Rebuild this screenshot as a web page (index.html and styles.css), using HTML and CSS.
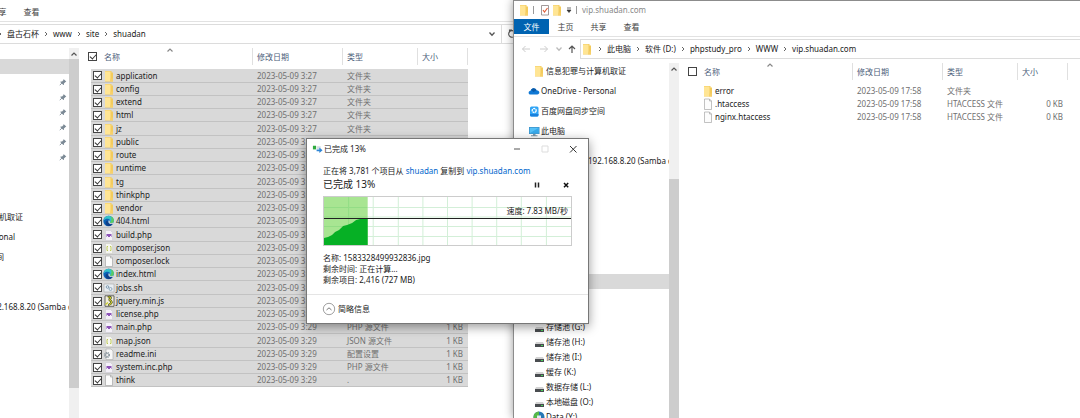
FILE: index.html
```html
<!DOCTYPE html>
<html lang="zh-CN">
<head>
  <meta charset="UTF-8">
  <meta name="viewport" content="width=device-width, initial-scale=1.0">
  <title>vip.shuadan.com</title>
  <link rel="stylesheet" href="styles.css">
</head>
<body>
  <!-- shared icons -->
  <svg class="sprite" aria-hidden="true">
    <symbol id="folder" viewBox="0 0 12 12">
      <path d="M2 1h6.500v1.500h1.500v9H2z" fill="#f3cb5c"/>
      <path d="M2 1.500h5.500v9.500H2z" fill="#ffe594"/>
      <path d="M7.500 8.500h2.500v3H7z" fill="#f7d06a"/>
    </symbol>
    <symbol id="file" viewBox="0 0 12 12">
      <path d="M2.500 1h5l2 2v8.500h-7z" fill="#fcfcfc" stroke="#a8a8a8" stroke-width=".7"/>
      <path d="M7.500 1v2h2" fill="none" stroke="#a8a8a8" stroke-width=".7"/>
    </symbol>
    <symbol id="edge" viewBox="0 0 12 12">
      <circle cx="5.500" cy="6" r="5.200" fill="#0c63b8"/>
      <path d="M1 4C2 1 5 .3 7.500 1.200 10.500 2.200 11.500 5 10.400 7c-.8 1.300-2.600 1.200-3.700.5C8 6 7 4 5 3.700 3.300 3.400 2 4 .6 5.500z" fill="#35c1c9"/>
      <path d="M7.500 1.200C10.500 2.200 11.500 5 10.400 7c-.8 1.300-2.600 1.200-3.700.5C9 6 9 3 7.500 1.200z" fill="#5ccb5f"/>
      <path d="M5 5.500c-.8 2 .7 4 4.500 3.700C7.500 12 2.500 11.400 2.500 8 2.500 6.500 3.500 5.600 5 5.500z" fill="#123f87"/>
      <path d="M5.800 5.200c1.200 0 1.200 1.300.9 2.300.9.800 2.500 1 3.700-.3L10 8.800C7 9.500 4.500 8 5.800 5.200z" fill="#d9d9d9"/>
    </symbol>
    <symbol id="php" viewBox="0 0 12 12">
      <path d="M2.500 1.500h5l2 2v8h-7z" fill="#f4f1f8" stroke="#c9c5d0" stroke-width=".5"/>
      <path d="M3.500 5h5v3H8V7H7v1H5V7H4v1h-.5z" fill="#8d54b8"/>
    </symbol>
    <symbol id="json" viewBox="0 0 12 12">
      <path d="M2.500 1.500h5l2 2v8h-7z" fill="#f6f6f0" stroke="#cbcbc4" stroke-width=".5"/>
      <path d="M5 4.500H4v4h1M7 4.500h1v4H7" fill="none" stroke="#b9c64a" stroke-width=".9"/>
    </symbol>
    <symbol id="sh" viewBox="0 0 12 12">
      <path d="M1 2h10v8H1z" fill="#e9eef2" stroke="#aaa" stroke-width=".6"/>
      <circle cx="4.500" cy="5" r="1.300" fill="none" stroke="#7e9cb5"/>
      <circle cx="7.500" cy="7" r="1.500" fill="none" stroke="#8fa9bd"/>
    </symbol>
    <symbol id="js" viewBox="0 0 12 12">
      <path d="M2 .8h9v10.500H2z" fill="#f2efd9" stroke="#444" stroke-width=".8"/>
      <path d="M5 2.500c2-1.500 3.500 0 2 1.500s2 1.500 1.500 3.500-3 1.500-2 3" fill="none" stroke="#2a2a2a" stroke-width="2.200"/>
      <path d="M5 2.500c2-1.500 3.500 0 2 1.500s2 1.500 1.500 3.500-3 1.500-2 3M2.500 9.500l2.500-2" fill="none" stroke="#c9cc2c" stroke-width="1.200"/>
    </symbol>
    <symbol id="ini" viewBox="0 0 12 12">
      <path d="M3 1h5l2 2v8.500H3z" fill="#f7f7f7" stroke="#aaa" stroke-width=".6"/>
      <circle cx="4" cy="7" r="2.400" fill="none" stroke="#8b979f" stroke-width="1.300" stroke-dasharray="1.200 .6"/>
      <circle cx="4" cy="7" r="1.600" fill="none" stroke="#8b979f" stroke-width=".7"/>
    </symbol>
    <symbol id="drive" viewBox="0 0 12 12">
      <path d="M3 6h7l1 2H2z" fill="#d3d3d3"/>
      <path d="M2 8h9v3H2z" fill="#4a4d50"/>
      <path d="M8 9h2v1H8z" fill="#49d05a"/>
    </symbol>
    <symbol id="pin" viewBox="0 0 8 8">
      <path d="M4.500 1l2.800 2.600-.8.300-1.600 1.500.1 1.300-.6.400L1.200 4l.6-.5 1.300.1 1.400-1.700z" fill="#7b8995"/>
      <path d="M2.900 5L.8 7.200" stroke="#7b8995" stroke-width=".9"/>
    </symbol>
    <symbol id="up" viewBox="0 0 8 8">
      <path d="M1.500 5.500L4 3l2.500 2.500" fill="none" stroke="currentColor" stroke-width="1.200"/>
    </symbol>
    <symbol id="down" viewBox="0 0 8 8">
      <path d="M1.500 2.500L4 5.200l2.500-2.700" fill="none" stroke="currentColor" stroke-width="1.300"/>
    </symbol>
    <symbol id="next" viewBox="0 0 4 8">
      <path d="M1 2l2 2-2 2" fill="none" stroke="currentColor" stroke-width=".9"/>
    </symbol>
  </svg>

  <main class="desktop">
    <!-- source window -->
    <section class="window source">
      <div class="titlebar"></div>
      <nav class="ribbon">
        <button class="tab push">共享</button>
        <button class="tab">查看</button>
      </nav>
      <div class="addressbar">
        <div class="path">
          <svg class="sep"><use href="#next"/></svg><a href="#">盘古石杯</a>
          <svg class="sep"><use href="#next"/></svg><a href="#">www</a>
          <svg class="sep"><use href="#next"/></svg><a href="#">site</a>
          <svg class="sep"><use href="#next"/></svg><a href="#">shuadan</a>
          <button class="drop" aria-label="展开"><svg class="small"><use href="#down"/></svg></button>
        </div>
        <button class="refresh" aria-label="刷新">
          <svg viewBox="0 0 10 10"><path d="M7.500 2.800A3.300 3.300 0 1 0 8.300 5M5 1H2.500v2.500" fill="none" stroke="#555" stroke-width="1.100"/></svg>
        </button>
      </div>
      <div class="body">
        <ul class="tree">
          <li class="selected first"></li>
          <li class="pinned"><svg class="small"><use href="#pin"/></svg></li>
          <li class="pinned"><svg class="small"><use href="#pin"/></svg></li>
          <li class="pinned"><svg class="small"><use href="#pin"/></svg></li>
          <li class="pinned"><svg class="small"><use href="#pin"/></svg></li>
          <li class="pinned"><svg class="small"><use href="#pin"/></svg></li>
          <li class="pinned"><svg class="small"><use href="#pin"/></svg></li>
          <li class="child after-pins">信息犯罪与计算机取证</li>
          <li class="root">OneDrive - Personal</li>
          <li class="root">百度网盘同步空间</li>
          <li class="share after-root">192.168.8.20 (Samba documents)</li>
        </ul>
        <div class="scrollbar">
          <svg class="small"><use href="#up"/></svg>
          <div class="thumb short"></div>
        </div>
        <table class="files checked">
          <colgroup>
            <col class="gutter"><col class="col-name"><col class="col-date"><col class="col-type"><col class="col-size">
          </colgroup>
          <thead>
            <tr>
              <th colspan="2"><label><input type="checkbox" checked>名称</label><svg class="small sort"><use href="#up"/></svg></th>
              <th>修改日期</th>
              <th>类型</th>
              <th>大小</th>
            </tr>
          </thead>
          <tbody>
            <tr><td class="gutter"></td><td><label><input type="checkbox" checked><svg class="icon"><use href="#folder"/></svg>application</label></td><td>2023-05-09 3:27</td><td>文件夹</td><td></td></tr>
            <tr><td class="gutter"></td><td><label><input type="checkbox" checked><svg class="icon"><use href="#folder"/></svg>config</label></td><td>2023-05-09 3:27</td><td>文件夹</td><td></td></tr>
            <tr><td class="gutter"></td><td><label><input type="checkbox" checked><svg class="icon"><use href="#folder"/></svg>extend</label></td><td>2023-05-09 3:27</td><td>文件夹</td><td></td></tr>
            <tr><td class="gutter"></td><td><label><input type="checkbox" checked><svg class="icon"><use href="#folder"/></svg>html</label></td><td>2023-05-09 3:27</td><td>文件夹</td><td></td></tr>
            <tr><td class="gutter"></td><td><label><input type="checkbox" checked><svg class="icon"><use href="#folder"/></svg>jz</label></td><td>2023-05-09 3:27</td><td>文件夹</td><td></td></tr>
            <tr><td class="gutter"></td><td><label><input type="checkbox" checked><svg class="icon"><use href="#folder"/></svg>public</label></td><td>2023-05-09 3:28</td><td></td><td></td></tr>
            <tr><td class="gutter"></td><td><label><input type="checkbox" checked><svg class="icon"><use href="#folder"/></svg>route</label></td><td>2023-05-09 3:28</td><td></td><td></td></tr>
            <tr><td class="gutter"></td><td><label><input type="checkbox" checked><svg class="icon"><use href="#folder"/></svg>runtime</label></td><td>2023-05-09 3:28</td><td></td><td></td></tr>
            <tr><td class="gutter"></td><td><label><input type="checkbox" checked><svg class="icon"><use href="#folder"/></svg>tg</label></td><td>2023-05-09 3:28</td><td></td><td></td></tr>
            <tr><td class="gutter"></td><td><label><input type="checkbox" checked><svg class="icon"><use href="#folder"/></svg>thinkphp</label></td><td>2023-05-09 3:28</td><td></td><td></td></tr>
            <tr><td class="gutter"></td><td><label><input type="checkbox" checked><svg class="icon"><use href="#folder"/></svg>vendor</label></td><td>2023-05-09 3:29</td><td></td><td></td></tr>
            <tr><td class="gutter"></td><td><label><input type="checkbox" checked><svg class="icon"><use href="#edge"/></svg>404.html</label></td><td>2023-05-09 3:29</td><td></td><td></td></tr>
            <tr><td class="gutter"></td><td><label><input type="checkbox" checked><svg class="icon"><use href="#php"/></svg>build.php</label></td><td>2023-05-09 3:29</td><td></td><td></td></tr>
            <tr><td class="gutter"></td><td><label><input type="checkbox" checked><svg class="icon"><use href="#json"/></svg>composer.json</label></td><td>2023-05-09 3:29</td><td></td><td></td></tr>
            <tr><td class="gutter"></td><td><label><input type="checkbox" checked><svg class="icon"><use href="#file"/></svg>composer.lock</label></td><td>2023-05-09 3:29</td><td></td><td></td></tr>
            <tr><td class="gutter"></td><td><label><input type="checkbox" checked><svg class="icon"><use href="#edge"/></svg>index.html</label></td><td>2023-05-09 3:29</td><td></td><td></td></tr>
            <tr><td class="gutter"></td><td><label><input type="checkbox" checked><svg class="icon"><use href="#sh"/></svg>jobs.sh</label></td><td>2023-05-09 3:29</td><td></td><td></td></tr>
            <tr><td class="gutter"></td><td><label><input type="checkbox" checked><svg class="icon"><use href="#js"/></svg>jquery.min.js</label></td><td>2023-05-09 3:29</td><td></td><td></td></tr>
            <tr><td class="gutter"></td><td><label><input type="checkbox" checked><svg class="icon"><use href="#php"/></svg>license.php</label></td><td>2023-05-09 3:29</td><td></td><td></td></tr>
            <tr><td class="gutter"></td><td><label><input type="checkbox" checked><svg class="icon"><use href="#php"/></svg>main.php</label></td><td>2023-05-09 3:29</td><td>PHP 源文件</td><td>1 KB</td></tr>
            <tr><td class="gutter"></td><td><label><input type="checkbox" checked><svg class="icon"><use href="#json"/></svg>map.json</label></td><td>2023-05-09 3:29</td><td>JSON 源文件</td><td>1 KB</td></tr>
            <tr><td class="gutter"></td><td><label><input type="checkbox" checked><svg class="icon"><use href="#ini"/></svg>readme.ini</label></td><td>2023-05-09 3:29</td><td>配置设置</td><td>1 KB</td></tr>
            <tr><td class="gutter"></td><td><label><input type="checkbox" checked><svg class="icon"><use href="#php"/></svg>system.inc.php</label></td><td>2023-05-09 3:29</td><td>PHP 源文件</td><td>1 KB</td></tr>
            <tr><td class="gutter"></td><td><label><input type="checkbox" checked><svg class="icon"><use href="#file"/></svg>think</label></td><td>2023-05-09 3:29</td><td>.</td><td>1 KB</td></tr>
          </tbody>
        </table>
      </div>
    </section>

    <!-- target window -->
    <section class="window target">
      <div class="titlebar">
        <svg class="icon"><use href="#folder"/></svg>
        <span class="bar"></span>
        <svg class="icon" viewBox="0 0 12 12"><path d="M2.500 1.500h7v9.500h-7z" fill="#fff" stroke="#8a8080" stroke-width=".8"/><path d="M4 6l1.500 2L8.500 4" fill="none" stroke="#e0603a" stroke-width="1.200"/></svg>
        <svg class="icon"><use href="#folder"/></svg>
        <svg class="small" viewBox="0 0 8 8"><path d="M2 2h4M2 4h4L4 6.500z" fill="#333" stroke="#333" stroke-width=".7"/></svg>
        <span class="bar"></span>
        <span class="caption">vip.shuadan.com</span>
      </div>
      <nav class="ribbon">
        <button class="tab file">文件</button>
        <button class="tab">主页</button>
        <button class="tab">共享</button>
        <button class="tab">查看</button>
      </nav>
      <div class="addressbar">
        <div class="history">
          <button aria-label="后退"><svg viewBox="0 0 10 10"><path d="M9 5H1.500M4.500 2l-3 3 3 3" fill="none" stroke="#ccc"/></svg></button>
          <button aria-label="前进"><svg viewBox="0 0 10 10"><path d="M1 5h7.500M5.500 2l3 3-3 3" fill="none" stroke="#ccc"/></svg></button>
          <button class="recent" aria-label="最近"><svg class="small"><use href="#down"/></svg></button>
          <button aria-label="上移"><svg viewBox="0 0 10 10"><path d="M5 9V2M2 5l3-3 3 3" fill="none" stroke="#555" stroke-width="1.200"/></svg></button>
        </div>
        <div class="path">
          <svg class="icon"><use href="#folder"/></svg>
          <svg class="sep"><use href="#next"/></svg><a href="#">此电脑</a>
          <svg class="sep"><use href="#next"/></svg><a href="#">软件 (D:)</a>
          <svg class="sep"><use href="#next"/></svg><a href="#">phpstudy_pro</a>
          <svg class="sep"><use href="#next"/></svg><a href="#">WWW</a>
          <svg class="sep"><use href="#next"/></svg><a href="#">vip.shuadan.com</a>
        </div>
      </div>
      <div class="body">
        <ul class="tree">
          <li class="child"><svg class="icon"><use href="#folder"/></svg>信息犯罪与计算机取证</li>
          <li class="root"><svg class="icon" viewBox="0 0 12 12"><path d="M2.500 9.500C0 9.500 0 6 2.500 5.800 3.500 2.500 7.500 2.500 8.500 5.200c3.500 0 3.800 4.300.7 4.300z" fill="#0f78d4"/><path d="M3 4.800c1.500-2.500 4.500-2 5.500.4L5.500 7z" fill="#0a5aa8"/></svg>OneDrive - Personal</li>
          <li class="root"><svg class="icon" viewBox="0 0 12 12"><rect x="2" y="1.500" width="8.500" height="10" rx="1.500" fill="#2fa4f5"/><circle cx="6.200" cy="5.500" r="2" fill="none" stroke="#fff" stroke-width="1.300" stroke-dasharray="2 .5"/><path d="M2 9h8.500v1q0 1.500-1.500 1.500H3.500Q2 11.500 2 10z" fill="#1980dc"/></svg>百度网盘同步空间</li>
          <li class="root"><svg class="icon" viewBox="0 0 12 12"><path d="M1 2h10.500v7H1z" fill="#3b8fc6"/><path d="M1.700 2.700h9.100v5.600H1.700z" fill="#55c1f7"/><path d="M1.700 8.300l9.100-5.600v5.600z" fill="#38a9ea"/><path d="M5 9h2.500v1.200h2v1h-6.500v-1h2z" fill="#7e97a8"/></svg>此电脑</li>
          <li class="share">192.168.8.20 (Samba documents)</li>
          <li class="selected later"></li>
          <li class="child drives"><svg class="icon"><use href="#drive"/></svg>存储池 (G:)</li>
          <li class="child"><svg class="icon"><use href="#drive"/></svg>储存池 (H:)</li>
          <li class="child"><svg class="icon"><use href="#drive"/></svg>储存池 (I:)</li>
          <li class="child"><svg class="icon"><use href="#drive"/></svg>缓存 (K:)</li>
          <li class="child"><svg class="icon"><use href="#drive"/></svg>数据存储 (L:)</li>
          <li class="child"><svg class="icon"><use href="#drive"/></svg>本地磁盘 (O:)</li>
          <li class="child"><svg class="icon" viewBox="0 0 12 12"><circle cx="6" cy="6" r="5.500" fill="#2778b5"/><path d="M6 .5A5.500 5.500 0 0 0 .5 6v3L6 5z" fill="#57b947"/><path d="M4 4.500h4V9H4z" fill="#dfeaf2"/></svg>Data (Y:)</li>
        </ul>
        <div class="scrollbar">
          <svg class="small"><use href="#up"/></svg>
          <div class="thumb low"></div>
        </div>
        <table class="files">
          <colgroup>
            <col class="gutter"><col class="col-name"><col class="col-date"><col class="col-type"><col class="col-size">
          </colgroup>
          <thead>
            <tr>
              <th colspan="2"><label><input type="checkbox">名称</label><svg class="small sort"><use href="#up"/></svg></th>
              <th>修改日期</th>
              <th>类型</th>
              <th>大小</th>
            </tr>
          </thead>
          <tbody>
            <tr><td class="gutter"></td><td><span class="entry"><svg class="icon"><use href="#folder"/></svg>error</span></td><td>2023-05-09 17:58</td><td>文件夹</td><td></td></tr>
            <tr><td class="gutter"></td><td><span class="entry"><svg class="icon"><use href="#file"/></svg>.htaccess</span></td><td>2023-05-09 17:58</td><td>HTACCESS 文件</td><td>0 KB</td></tr>
            <tr><td class="gutter"></td><td><span class="entry"><svg class="icon"><use href="#file"/></svg>nginx.htaccess</span></td><td>2023-05-09 17:58</td><td>HTACCESS 文件</td><td>0 KB</td></tr>
          </tbody>
        </table>
      </div>
    </section>

    <!-- copy progress -->
    <section class="dialog">
      <header class="dialog-title">
        <svg class="copy" viewBox="0 0 12 12"><path d="M1 3h3.500v4H1z" fill="#2faa3f"/><path d="M5.500 3.500h4v3h-4z" fill="#d5dde3"/><path d="M5 7h3V5l3.500 3L8 11V9H5z" fill="#2f86d6"/></svg>
        <span>已完成 13%</span>
        <div class="controls">
          <button aria-label="最小化"><svg viewBox="0 0 10 10"><path d="M2 5h6" stroke="#555"/></svg></button>
          <button aria-label="最大化" disabled><svg viewBox="0 0 10 10"><path d="M2 2h6v6H2z" fill="none" stroke="#ddd"/></svg></button>
          <button aria-label="关闭"><svg viewBox="0 0 10 10"><path d="M2 2l6.500 6.500M8.500 2L2 8.500" stroke="#333"/></svg></button>
        </div>
      </header>
      <div class="progress">
        <p class="summary">正在将 3,781 个项目从 <a href="#">shuadan</a> 复制到 <a href="#">vip.shuadan.com</a></p>
        <div class="status">
          <h1>已完成 13%</h1>
          <button aria-label="暂停"><svg viewBox="0 0 10 10"><path d="M3.500 2.500v5M6.500 2.500v5" stroke="#222" stroke-width="1.500"/></svg></button>
          <button aria-label="取消"><svg viewBox="0 0 10 10"><path d="M3 3l4.200 4.200M7.200 3L3 7.200" stroke="#111" stroke-width="1.500"/></svg></button>
        </div>
        <div class="chart">
          <svg viewBox="0 0 246 48" preserveAspectRatio="none">
            <path d="M24.500 0v48M49 0v48M74 0v48M98.500 0v48M123 0v48M147.500 0v48M172 0v48M196.500 0v48M221.500 0v48M0 10.500h246M0 20h246M0 29.500h246M0 39.500h246" stroke="#d3efd8" stroke-width="1"/>
            <path d="M0 0h43.500v48H0z" fill="#a8e592"/>
            <path d="M24.500 0v48M0 10.500h43M0 20h43M0 29.500h43" stroke="#93dd86" stroke-width="1"/>
            <path d="M0 41l4-1 4-2 3-3 4-2 4-4 4-1 5-2 4-3 4-1 3-1h4.500V48H0z" fill="#06b025"/>
            <path d="M0 21.500h246" stroke="#222"/>
          </svg>
          <span class="speed">速度: 7.83 MB/秒</span>
        </div>
        <p class="detail">名称: 1583328499932836.jpg</p>
        <p class="detail">剩余时间: 正在计算...</p>
        <p class="detail">剩余项目: 2,416 (727 MB)</p>
      </div>
      <footer class="dialog-footer">
        <button class="less">
          <svg viewBox="0 0 14 14"><circle cx="7" cy="7" r="5.700" fill="none" stroke="#888" stroke-width=".8"/><path d="M4.500 8L7 5.800 9.500 8" fill="none" stroke="#777"/></svg>
          简略信息
        </button>
      </footer>
    </section>
  </main>
</body>
</html>
```

FILE: styles.css
```css
* {
  box-sizing: border-box;
}
body {
  margin: 0;
  background: #fff;
  color: #222;
  font-family: "Noto Sans", "Noto Sans CJK SC", sans-serif;
  font-size: 8px;
  line-height: 12px;
}
button {
  font: inherit;
  color: inherit;
  background: none;
  border: none;
  padding: 0;
}
a {
  color: inherit;
  text-decoration: none;
}
p,
h1,
ul {
  margin: 0;
  padding: 0;
}
svg {
  display: block;
  flex: none;
  width: 10px;
  height: 10px;
}
.sprite {
  display: none;
}
.icon {
  width: 12px;
  height: 12px;
}
.small {
  width: 8px;
  height: 8px;
}
.desktop {
  position: relative;
  height: 100vh;
  overflow: hidden;
}

/* explorer windows */
.window {
  position: absolute;
  display: flex;
  flex-direction: column;
  background: #fff;
  border: 1px solid #8c8c8c;
  border-bottom: none;
  overflow: hidden;
}
.source {
  left: -87px;
  top: -15px;
  bottom: 0;
  width: 640px;
}
.target {
  left: 513px;
  right: -20px;
  top: 0;
  bottom: 0;
  box-shadow: 0 0 9px rgba(0, 0, 0, 0.4);
}
.titlebar {
  display: flex;
  align-items: center;
  height: 18px;
  padding-left: 4px;
}
.titlebar .bar {
  width: 1px;
  height: 8px;
  margin: 0 5px 0 3px;
  background: #999;
}
.titlebar .small {
  margin-left: 2px;
}
.caption {
  color: #888;
}
.ribbon {
  display: flex;
  height: 18px;
  border-bottom: 1px solid #e2e2e2;
}
.tab {
  width: 33px;
  height: 15px;
  color: #444;
}
.tab.file {
  width: 35px;
  background: #0063b1;
  color: #fff;
}
.tab.push {
  margin-left: 68px;
}
.addressbar {
  display: flex;
  height: 20px;
  margin-top: 2px;
}
.history {
  display: flex;
  align-items: center;
  gap: 8px;
  width: 66px;
  padding-left: 7px;
}
.history .recent {
  margin-right: -4px;
  margin-left: -2px;
  color: #bbb;
}
.path {
  flex: 1;
  display: flex;
  align-items: center;
  border: 1px solid #dcdcdc;
}
.source .path {
  flex: none;
  width: 522px;
  margin-left: 66px;
  padding-left: 12px;
}
.sep {
  width: 4px;
  height: 8px;
  margin: 0 5px;
  color: #555;
}
.drop {
  margin-left: auto;
  margin-right: 5px;
  color: #555;
}
.refresh {
  width: 30px;
  padding-left: 5px;
  border: 1px solid #dcdcdc;
  border-left: none;
}
.body {
  flex: 1;
  display: flex;
  align-items: stretch;
  min-height: 0;
  margin-top: 4px;
}

/* folder tree */
.tree {
  width: 155px;
  overflow: hidden;
  list-style: none;
}
.tree li {
  display: flex;
  align-items: center;
  gap: 1px;
  height: 15px;
  white-space: nowrap;
}
.tree .child {
  padding-left: 19px;
}
.tree .root {
  margin-top: 5px;
  padding-left: 14px;
}
.source .child {
  padding-left: 29px;
}
.source .root {
  padding-left: 26px;
}
.tree .share {
  margin-top: 15px;
  padding-left: 74px;
}
.tree .selected {
  background: #d9d9d9;
}
.tree .first {
  margin-top: 11px;
}
.tree .later {
  margin-top: 106px;
}
.tree .drives {
  margin-top: 30px;
}
.tree .pinned {
  justify-content: flex-end;
  padding-right: 2px;
}
.tree .after-pins {
  margin-top: 45px;
}
.tree .after-root {
  margin-top: 35px;
}
.scrollbar {
  width: 10px;
  margin-right: 5px;
  padding-top: 2px;
  background: #f0f0f0;
  color: #555;
}
.scrollbar .small {
  margin: 0 1px;
}
.thumb {
  margin-top: 1px;
  background: #cdcdcd;
}
.thumb.short {
  height: 329px;
}
.thumb.low {
  height: 100%;
  margin-top: 106px;
}

/* file list */
.files {
  align-self: flex-start;
  width: 384px;
  table-layout: fixed;
  border-collapse: separate;
  border-spacing: 0;
  white-space: nowrap;
}
.files th {
  position: relative;
  height: 17px;
  padding: 0 0 0 4px;
  border-right: 1px solid #e0e0e0;
  color: #4c607a;
  font-weight: normal;
  text-align: left;
}
.files thead::after {
  content: "";
  display: block;
  height: 4px;
}
.files label,
.entry {
  display: flex;
  align-items: center;
  gap: 1px;
}
.files th label {
  gap: 7px;
}
.gutter {
  width: 7px;
}
.col-name {
  width: 162px;
}
.col-date {
  width: 90px;
}
.col-type {
  width: 75px;
}
.col-size {
  width: 50px;
}
.sort {
  position: absolute;
  left: 82px;
  top: -2px;
  color: #888;
}
.files td {
  height: 13px;
  padding: 0 0 0 4px;
  color: #707070;
  line-height: 12px;
}
.files td:nth-child(2) {
  padding-left: 2px;
  color: #222;
}
.files td:last-child {
  padding: 0 5px 0 0;
  text-align: right;
}
.files td.gutter {
  padding: 0;
}
.entry {
  padding-left: 9px;
}
.checked td:not(.gutter) {
  background: #d9d9d9;
  border-bottom: 1px solid #c2c2c2;
}
.checked tbody tr:nth-child(4n + 1) td {
  height: 14px;
}
input[type="checkbox"] {
  appearance: none;
  flex: none;
  position: relative;
  width: 9px;
  height: 9px;
  margin: 0;
  border: 1px solid #444;
  background: #fff;
}
input[type="checkbox"]:checked::after {
  content: "";
  position: absolute;
  left: 2px;
  top: 0;
  width: 3px;
  height: 5px;
  border: solid #333;
  border-width: 0 1px 1px 0;
  transform: rotate(42deg);
}

/* copy dialog */
.dialog {
  position: absolute;
  left: 306px;
  top: 138px;
  width: 283px;
  background: #fff;
  border: 1px solid #777;
  box-shadow: 0 3px 10px rgba(0, 0, 0, 0.4);
}
.dialog-title {
  display: flex;
  align-items: center;
  gap: 1px;
  height: 19px;
  padding-left: 5px;
}
.copy {
  width: 11px;
  height: 11px;
}
.controls {
  display: flex;
  gap: 18px;
  margin-left: auto;
  padding-right: 10px;
}
.progress {
  padding: 7px 16px 9px;
}
.progress a {
  color: #0066cc;
}
.status {
  display: flex;
  align-items: center;
  gap: 19px;
  height: 15px;
  padding-right: 1px;
}
.status h1 {
  flex: 1;
  font-size: 10px;
  line-height: 15px;
  font-weight: normal;
}
.chart {
  position: relative;
  height: 50px;
  margin: 4px 0 6px;
  border: 1px solid #ccc;
}
.chart svg {
  width: 100%;
  height: 100%;
}
.speed {
  position: absolute;
  right: 3px;
  top: 8px;
}
.detail {
  line-height: 11px;
}
.dialog-footer {
  padding: 7px 15px;
  border-top: 1px solid #e5e5e5;
}
.less {
  display: flex;
  align-items: center;
  gap: 2px;
}
.less svg {
  width: 14px;
  height: 14px;
}
```
